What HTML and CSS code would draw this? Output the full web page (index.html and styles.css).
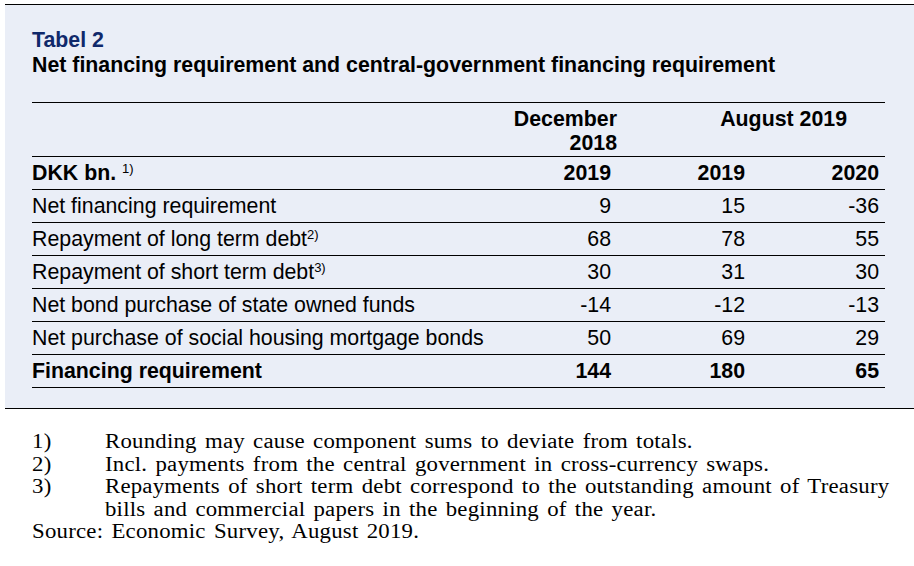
FILE: index.html
```html
<!DOCTYPE html>
<html>
<head>
<meta charset="utf-8">
<link rel="stylesheet" href="styles.css">
</head>
<body>
<div class="page">
  <section class="box">
    <h1 class="tag">Tabel 2</h1>
    <h2 class="title">Net financing requirement and central-government financing requirement</h2>
    <table class="tbl">
      <colgroup>
        <col class="c-label"><col class="c-first"><col class="c-num"><col class="c-num">
      </colgroup>
      <thead>
        <tr class="head">
          <th></th>
          <th class="dec">December<br>2018</th>
          <th class="aug" colspan="2">August 2019</th>
        </tr>
        <tr class="years">
          <th class="lbl">DKK bn. <sup>1)</sup></th>
          <th class="num">2019</th>
          <th class="num">2019</th>
          <th class="num">2020</th>
        </tr>
      </thead>
      <tbody>
        <tr><td class="lbl">Net financing requirement</td><td class="num">9</td><td class="num">15</td><td class="num">-36</td></tr>
        <tr><td class="lbl">Repayment of long term debt<sup>2)</sup></td><td class="num">68</td><td class="num">78</td><td class="num">55</td></tr>
        <tr><td class="lbl">Repayment of short term debt<sup>3)</sup></td><td class="num">30</td><td class="num">31</td><td class="num">30</td></tr>
        <tr><td class="lbl">Net bond purchase of state owned funds</td><td class="num">-14</td><td class="num">-12</td><td class="num">-13</td></tr>
        <tr><td class="lbl">Net purchase of social housing mortgage bonds</td><td class="num">50</td><td class="num">69</td><td class="num">29</td></tr>
        <tr class="total"><td class="lbl">Financing requirement</td><td class="num">144</td><td class="num">180</td><td class="num">65</td></tr>
      </tbody>
    </table>
  </section>
  <div class="notes">
    <div class="notes-body">
      <div class="note"><span class="nn">1)</span><span class="nt">Rounding may cause component sums to deviate from totals.</span></div>
      <div class="note"><span class="nn">2)</span><span class="nt">Incl. payments from the central government in cross-currency swaps.</span></div>
      <div class="note"><span class="nn">3)</span><span class="nt">Repayments of short term debt correspond to the outstanding amount of Treasury bills and commercial papers in the beginning of the year.</span></div>
      <div class="source">Source: Economic Survey, August 2019.</div>
    </div>
  </div>
</div>
</body>
</html>
```

FILE: styles.css
```css
html, body {
  margin: 0;
  padding: 0;
  background: #ffffff;
}
.page {
  padding: 4px 0 0 5px;
  font-family: "Liberation Sans", Arial, sans-serif;
  color: #000;
}
.box {
  background: #eaeef7;
  border-top: 1px solid #000;
  border-bottom: 1px solid #000;
  padding: 23px 0 20px 27px;
}
.tag {
  margin: 0;
  font-size: 21.33px;
  line-height: 25px;
  font-weight: bold;
  color: #10296b;
}
.title {
  margin: 0 0 24px 0;
  font-size: 21.33px;
  line-height: 25px;
  font-weight: bold;
}
.tbl {
  border-collapse: collapse;
  table-layout: fixed;
  width: 853px;
  font-size: 21.33px;
  border-top: 1px solid #000;
}
.c-label { width: 456px; }
.c-first { width: 129px; }
.c-num { width: 134px; }
.tbl th, .tbl td {
  padding: 0;
  border-bottom: 1px solid #000;
  height: 32px;
  line-height: 24px;
  white-space: nowrap;
}
.tbl th { font-weight: bold; }
.head th {
  border-bottom: 1px solid #000;
  height: 49px;
  vertical-align: top;
  padding-top: 4px;
  line-height: 24px;
}
.dec { text-align: right; padding-right: 0; }
.aug { text-align: right; padding-right: 38px !important; }
.lbl { text-align: left; }
.num { text-align: right; padding-right: 6px !important; }
.total td { font-weight: bold; }
sup {
  font-size: 13px;
  line-height: 0;
  vertical-align: 7px;
  font-weight: normal;
}
.notes {
  padding: 21px 0 0 27px;
}
.notes-body {
  width: 770px;
  transform: scaleX(1.14);
  transform-origin: 0 0;
  font-family: "Liberation Serif", "Times New Roman", serif;
  font-size: 20px;
  line-height: 22.5px;
  letter-spacing: 0.2px;
  word-spacing: 2px;
}
.note {
  display: flex;
}
.nn { width: 64px; flex: none; }
.nt { width: 700px; }
```
